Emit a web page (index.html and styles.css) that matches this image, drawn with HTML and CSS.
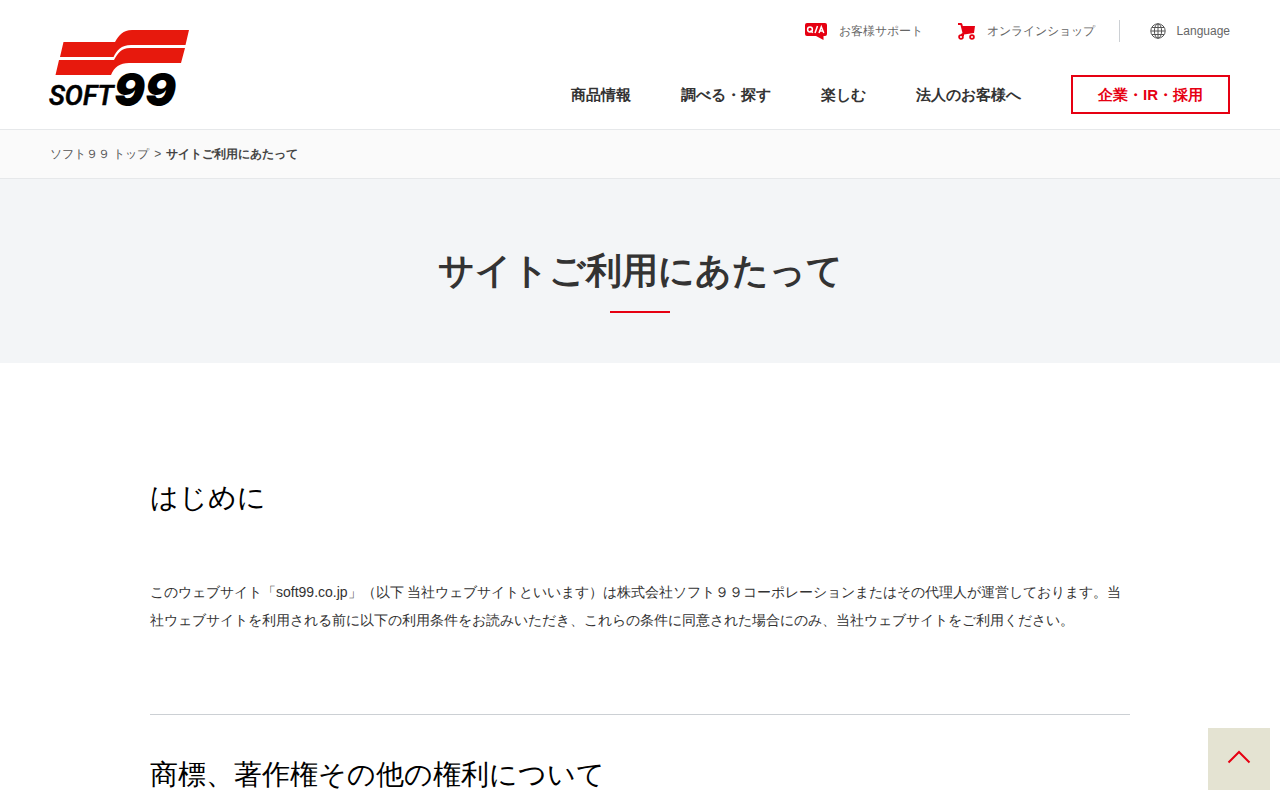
FILE: index.html
```html
<!DOCTYPE html>
<html lang="ja">
<head>
<meta charset="utf-8">
<meta name="viewport" content="width=device-width, initial-scale=1">
<title>サイトご利用にあたって</title>
<link rel="stylesheet" href="styles.css">
</head>
<body>
<header class="header">
  <a class="logo" href="#" aria-label="SOFT99">
    <svg width="140" height="78" viewBox="0 0 140 78">
      <g fill="#e7190d">
        <path d="M13.500 12H65C69 5 73 0 82 0H139L135.500 15H81C71 15 67 20 63.500 27H10Z"/>
        <path d="M9 30H64C68 23 71 18 80 18H135L131 33H79C70 33 64 37 61 45H5.500Z"/>
      </g>
      <text class="logo-soft" x="-1" y="75">SOFT</text>
      <text class="logo-99" x="64" y="76">99</text>
    </svg>
  </a>
  <div class="header-nav">
    <ul class="utility">
      <li><a class="utility-link" href="#">
        <svg width="22" height="17" viewBox="0 0 22 17"><path fill="#e60012" d="M2 0H20Q22 0 22 2V11Q22 13 20 13H18.500L18.500 17L11 13H2Q0 13 0 11V2Q0 0 2 0Z"/><g fill="none" stroke="#fff" stroke-width="1.500"><circle cx="5" cy="6.500" r="2.400"/><path d="M5.500 7.500L7.800 9.700M10 10L12.500 3M14 10L16.300 3.800L18.800 10M14.800 8H18"/></g></svg>
        お客様サポート</a></li>
      <li><a class="utility-link" href="#">
        <svg width="17" height="17" viewBox="0 0 17 17"><path fill="#e60012" d="M0 0H3Q4 0 4.300 1L4.800 3H17L16 10L6 11.500V13H3V11L4.500 10L2.500 2H0Z"/><g fill="#fff" stroke="#e60012" stroke-width="1.800"><circle cx="3" cy="14" r="1.900"/><circle cx="14" cy="14" r="1.900"/></g></svg>
        オンラインショップ</a></li>
      <li class="language"><a class="utility-link" href="#">
        <svg width="16" height="16" viewBox="0 0 16 16" fill="none" stroke="#555"><circle cx="8" cy="8" r="7.200"/><ellipse cx="8" cy="8" rx="3.600" ry="7.200"/><path d="M8 1V15M1 8H15M2 4.500H14M2 11.500H14"/></svg>
        Language</a></li>
    </ul>
    <nav class="main-nav">
      <a href="#">商品情報</a>
      <a href="#">調べる・探す</a>
      <a href="#">楽しむ</a>
      <a href="#">法人のお客様へ</a>
      <a class="corporate" href="#">企業・IR・採用</a>
    </nav>
  </div>
</header>
<nav class="breadcrumb"><a href="#">ソフト９９ トップ</a><span>&gt;</span><strong>サイトご利用にあたって</strong></nav>
<div class="hero"><h1>サイトご利用にあたって</h1></div>
<main class="content">
  <section class="section">
    <h2>はじめに</h2>
    <p>このウェブサイト「soft99.co.jp」（以下 当社ウェブサイトといいます）は株式会社ソフト９９コーポレーションまたはその代理人が運営しております。当社ウェブサイトを利用される前に以下の利用条件をお読みいただき、これらの条件に同意された場合にのみ、当社ウェブサイトをご利用ください。</p>
  </section>
  <section class="section">
    <h2>商標、著作権その他の権利について</h2>
  </section>
</main>
<a class="page-top" href="#" aria-label="ページトップへ"><svg width="24" height="14" viewBox="0 0 24 14"><path d="M1.500 12.500L12 2L22.500 12.500" fill="none" stroke="#e60012" stroke-width="2"/></svg></a>
</body>
</html>
```

FILE: styles.css
```css
* { box-sizing: border-box; }
body {
  margin: 0;
  color: #333;
  background: #fff;
  font-family: "Liberation Sans", sans-serif;
  font-size: 14px;
  line-height: 28px;
}
a { color: inherit; text-decoration: none; }
.header {
  display: flex;
  justify-content: space-between;
  align-items: flex-start;
  padding: 20px 50px 15px;
  border-bottom: 1px solid #e6e8ea;
}
.logo { padding-top: 10px; }
.logo svg { display: block; overflow: visible; }
.logo-soft {
  font: italic 500 27px Roboto, sans-serif;
  stroke: #000;
  stroke-width: 0.6px;
}
.logo-99 { font: italic 900 46px Inter, sans-serif; }
.header-nav {
  display: flex;
  flex-direction: column;
  align-items: flex-end;
  gap: 33px;
}
.utility {
  display: flex;
  margin: 0;
  padding: 0;
  list-style: none;
  color: #666;
  font-size: 12px;
  line-height: 22px;
}
.utility li + li { margin-left: 35px; }
.utility .language {
  margin-left: 24px;
  padding-left: 30px;
  border-left: 1px solid #ccd0d4;
}
.utility-link { display: flex; align-items: center; gap: 12px; }
.utility .language .utility-link { gap: 11px; }
.main-nav {
  display: flex;
  align-items: center;
  gap: 50px;
  font-size: 15px;
  font-weight: bold;
  line-height: 35px;
}
.corporate {
  padding: 0 25px;
  border: 2px solid #e60012;
  color: #e60012;
}
.breadcrumb {
  display: flex;
  gap: 5px;
  padding: 10px 50px;
  border-bottom: 1px solid #e6e8ea;
  background: #fafafa;
  color: #555;
  font-size: 12px;
}
.breadcrumb strong { color: #444; }
.hero { padding: 64px 50px 50px; background: #f3f5f7; }
h1 {
  margin: 0;
  font-size: 36px;
  line-height: 56px;
  text-align: center;
}
h1::after {
  content: "";
  display: block;
  width: 60px;
  height: 2px;
  margin: 12px auto 0;
  background: #e60012;
}
.content {
  max-width: 1080px;
  margin: 0 auto;
  padding: 75px 50px;
}
.section { padding: 38px 0 80px; }
.section + .section { border-top: 1px solid #ccd0d4; }
h2 {
  margin: 0 0 58px;
  color: #000;
  font-size: 28px;
  font-weight: normal;
  line-height: 44px;
}
p { margin: 0; }
.page-top {
  position: fixed;
  right: 10px;
  bottom: 10px;
  display: flex;
  align-items: center;
  justify-content: center;
  width: 62px;
  height: 62px;
  background: #e4e3d2;
}
.page-top svg { margin-bottom: 4px; }
```
